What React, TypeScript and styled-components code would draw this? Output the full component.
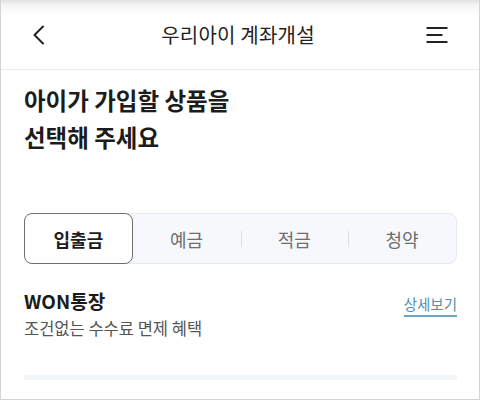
import React, { useState } from 'react';
import styled, { createGlobalStyle } from 'styled-components';

const GlobalStyle = createGlobalStyle`
    html, body {
        margin: 0;
        padding: 0;
        background: #ffffff;
    }
    body {
        font-family: "Noto Sans CJK KR", "Noto Sans", sans-serif;
        color: #222222;
    }
    * {
        box-sizing: border-box;
    }
`;

const Screen = styled.div`
    width: 480px;
    height: 400px;
    overflow: hidden;
    border-left: 1px solid #d4d4d4;
    border-right: 1px solid #d4d4d4;
    border-bottom: 1px solid #d4d4d4;
    background: #ffffff;
`;

const Header = styled.header`
    display: flex;
    align-items: center;
    justify-content: space-between;
    height: 70px;
    padding: 0 30px 0 26px;
    border-bottom: 1px solid #ececec;
    background: linear-gradient(to bottom, #e2e2e2 0px, #f6f6f6 6px, #ffffff 16px);
`;

const IconButton = styled.button`
    display: flex;
    align-items: center;
    justify-content: center;
    width: 24px;
    height: 24px;
    padding: 0;
    border: none;
    background: none;
    color: #222222;
`;

const Title = styled.h1`
    margin: 0;
    font-size: 20px;
    font-weight: 400;
    letter-spacing: 0.2px;
    color: #222222;
`;

const Content = styled.main`
    padding: 0 22px 0 23px;
`;

const Heading = styled.h2`
    margin: 12px 0 0;
    font-size: 23.5px;
    line-height: 37px;
    font-weight: 700;
    color: #1c1c1c;
`;

const Tabs = styled.div`
    display: grid;
    grid-template-columns: repeat(4, 1fr);
    height: 51px;
    margin-top: 57px;
    border: 1px solid #e6e9ee;
    border-radius: 8px;
    background: #f6f8fb;
`;

const Tab = styled.button<{ $active?: boolean; $divider?: boolean }>`
    position: relative;
    margin: ${p => (p.$active ? '-1px 0 -1px -1px' : '0')};
    border: ${p => (p.$active ? '1px solid #707070' : 'none')};
    border-radius: 8px;
    background: ${p => (p.$active ? '#ffffff' : 'transparent')};
    font-family: inherit;
    font-size: 18px;
    font-weight: ${p => (p.$active ? 600 : 400)};
    color: ${p => (p.$active ? '#1e1e1e' : '#6e6e6e')};
    cursor: pointer;

    &::before {
        content: "";
        display: ${p => (p.$divider ? 'block' : 'none')};
        position: absolute;
        left: 0;
        top: 17px;
        width: 1px;
        height: 16px;
        background: #dcdfe3;
    }
`;

const Product = styled.section`
    display: flex;
    justify-content: space-between;
    align-items: flex-start;
    margin-top: 24px;
`;

const ProductInfo = styled.div`
    display: flex;
    flex-direction: column;
    gap: 2px;
`;

const ProductName = styled.div`
    font-size: 19px;
    line-height: 26px;
    font-weight: 700;
    color: #1a1a1a;
`;

const ProductDesc = styled.div`
    font-size: 16.5px;
    line-height: 24px;
    color: #555555;
`;

const DetailLink = styled.a`
    margin-top: 6px;
    padding-bottom: 1px;
    font-size: 14.5px;
    line-height: 20px;
    color: #4f8fb0;
    text-decoration: none;
    border-bottom: 2px solid #6ea3c0;
`;

const CardTop = styled.div`
    height: 5px;
    margin-top: 35px;
    border-radius: 2px 2px 0 0;
    background: #f3f6f9;
`;

function BackIcon() {
    return (
        <svg width="14" height="20" viewBox="0 0 14 20" fill="none">
            <path d="M11 1.5 L2.5 10 L11 18.5" stroke="currentColor" strokeWidth="2" strokeLinecap="round" strokeLinejoin="round" />
        </svg>
    );
}

function MenuIcon() {
    return (
        <svg width="22" height="18" viewBox="0 0 22 18" fill="none">
            <path d="M0.5 2 H21.5 M0.5 9 H16.5 M0.5 16 H21.5" stroke="currentColor" strokeWidth="2.2" />
        </svg>
    );
}

const TAB_LABELS = ['입출금', '예금', '적금', '청약'];

export default function App() {
    const [active, setActive] = useState(0);

    return (
        <>
            <GlobalStyle />
            <Screen>
                <Header>
                    <IconButton aria-label="뒤로">
                        <BackIcon />
                    </IconButton>
                    <Title>우리아이 계좌개설</Title>
                    <IconButton aria-label="메뉴">
                        <MenuIcon />
                    </IconButton>
                </Header>
                <Content>
                    <Heading>
                        아이가 가입할 상품을
                        <br />
                        선택해 주세요
                    </Heading>
                    <Tabs>
                        {TAB_LABELS.map((label, i) => (
                            <Tab
                                key={label}
                                $active={i === active}
                                $divider={i !== active && i - 1 !== active && i > 0}
                                onClick={() => setActive(i)}
                            >
                                {label}
                            </Tab>
                        ))}
                    </Tabs>
                    <Product>
                        <ProductInfo>
                            <ProductName>WON통장</ProductName>
                            <ProductDesc>조건없는 수수료 면제 혜택</ProductDesc>
                        </ProductInfo>
                        <DetailLink href="#">상세보기</DetailLink>
                    </Product>
                    <CardTop />
                </Content>
            </Screen>
        </>
    );
}
